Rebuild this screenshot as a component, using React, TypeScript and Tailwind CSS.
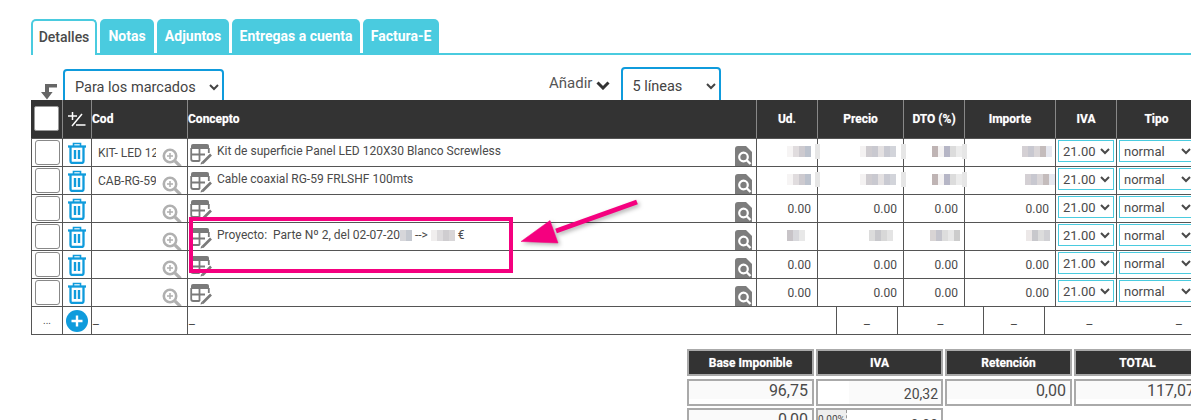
const colsRow = "grid grid-cols-[31px_29px_96px_569px_61px_86px_61px_91px_61px_80px]";
const colsFoot = "grid grid-cols-[31px_29px_96px_649px_61px_86px_61px_89px_90px]";

type Cell = { px: string[]; right: number; bar?: boolean } | string;

const blobA = ["#f6f4f4", "#e0dcde", "#cdcacf", "#bcc2cd"];
const blobB = ["#f4f2f2", "#cfccd0", "#c9c9d0", "#e4e1e2", "#c9cad2", "#d2d4da"];
const blobC = ["#bfb4b4", "#f4f2f2", "#b6b6c6", "#dcdcdc", "#ececec"];
const blobD = ["#d4d0d4", "#c8c8d0", "#dad6d8", "#c4bcbc", "#e6e8f0"];

const rows: { cod: string; text: React.ReactNode; vals: Cell[] }[] = [
  {
    cod: "KIT- LED 12",
    text: "Kit de superficie Panel LED 120X30 Blanco Screwless",
    vals: [
      { px: blobA, right: 6, bar: true },
      { px: blobB, right: 7, bar: true },
      { px: blobC, right: 2, bar: true },
      { px: blobD, right: 3 },
    ],
  },
  {
    cod: "CAB-RG-59",
    text: "Cable coaxial RG-59 FRLSHF 100mts",
    vals: [
      { px: blobA, right: 6, bar: true },
      { px: blobB, right: 7, bar: true },
      { px: blobC, right: 2, bar: true },
      { px: blobD, right: 0 },
    ],
  },
  { cod: "", text: "", vals: ["0.00", "0.00", "0.00", "0.00"] },
  {
    cod: "",
    text: (
      <>
        Proyecto:&nbsp; Parte Nº 2, del 02-07-20
        <Blob px={["#d6d6da", "#c4c8d0"]} /> --&gt; <Blob px={["#f0eeee", "#dddbdd", "#cfcdd0", "#d8d6d8"]} /> €
      </>
    ),
    vals: [
      { px: ["#c8c4c8", "#d8d8dc", "#e8e8e8"], right: 12 },
      { px: ["#dcdcdc", "#c8c8cc", "#d8d8d8", "#e4e4e4"], right: 10 },
      { px: ["#d8d4d4", "#c4c4cc", "#dddddd", "#e8e8e8", "#cccccc"], right: 4 },
      { px: ["#ece8e8", "#c8c8cc", "#dcdcdc", "#d0d0d4"], right: 5 },
    ],
  },
  { cod: "", text: "", vals: ["0.00", "0.00", "0.00", "0.00"] },
  { cod: "", text: "", vals: ["0.00", "0.00", "0.00", "0.00"] },
];

function Blob({ px }: { px: string[] }) {
  return (
    <span className="inline-flex h-[11px] align-middle blur-[0.6px]">
      {px.map((c, i) => (
        <span key={i} className="h-full w-[6px]" style={{ backgroundColor: c }} />
      ))}
    </span>
  );
}

function TrashIcon() {
  return (
    <svg width="20" height="22" viewBox="0 0 20 22" fill="none" stroke="#0f9bdc" strokeWidth="2.3">
      <path d="M1 4.500h18" />
      <path d="M6.500 4V1.500h7V4" strokeWidth="1.6" />
      <path d="M3.500 5v14a2 2 0 0 0 2 2h9a2 2 0 0 0 2-2V5" />
      <path d="M8 8v9M12 8v9" strokeWidth="2.4" />
    </svg>
  );
}

function ZoomIcon() {
  return (
    <svg width="20" height="20" viewBox="0 0 20 20" fill="none" stroke="#b0b0b0">
      <circle cx="8" cy="8" r="6.200" strokeWidth="2.6" />
      <path d="M8 5v6M5 8h6" strokeWidth="1.5" />
      <path d="M12.800 12.800 18.500 18.500" strokeWidth="3.2" />
    </svg>
  );
}

function TableEditIcon() {
  return (
    <svg width="22" height="22" viewBox="0 0 22 22" fill="none">
      <path d="M1 6V3a2 2 0 0 1 2-2h14a2 2 0 0 1 2 2v3z" fill="#7a7a7a" />
      <path d="M1.200 5v11a2 2 0 0 0 2 2h6.500M18.800 5v5M1 11.500h14M9.500 5v13" stroke="#7a7a7a" strokeWidth="1.8" />
      <path d="M12.500 20 21 11.500" stroke="#7a7a7a" strokeWidth="2.6" />
      <path d="m10.500 21.500.8-2.800 2 2z" fill="#7a7a7a" />
    </svg>
  );
}

function DocSearchIcon() {
  return (
    <svg width="18" height="20" viewBox="0 0 18 20" fill="none">
      <path d="M3 0h8l6 6v14H0V3a3 3 0 0 1 3-3z" fill="#7d7d7d" />
      <circle cx="8.500" cy="11" r="4.300" stroke="#fff" strokeWidth="2.2" />
      <path d="m11.500 14 4 4" stroke="#fff" strokeWidth="2.4" />
    </svg>
  );
}

function ValueCell({ value }: { value: Cell }) {
  if (typeof value === "string") {
    return <div className="h-full border-r border-[#555] pr-[6px] pt-[5px] text-right">{value}</div>;
  }
  return (
    <div className="relative flex h-full justify-end border-r border-[#555] pt-[7px]" style={{ paddingRight: value.right }}>
      <Blob px={value.px} />
      {value.bar && <span className="absolute -right-[3px] top-[5px] h-[15px] w-[5px] bg-[#e6e6e6]" />}
    </div>
  );
}

function HeaderCell({ label, center = true }: { label: string; center?: boolean }) {
  return (
    <div className={`flex h-full items-center border-r border-[#888] text-[12px] font-bold text-white [text-shadow:0_0_1px_rgba(255,255,255,0.5)] ${center ? "justify-center" : ""}`}>
      {label}
    </div>
  );
}

function SumBox({ children, className = "" }: { children: React.ReactNode; className?: string }) {
  return <div className={`h-[27px] border-2 border-[#aaa] ${className}`}>{children}</div>;
}

export default function App() {
  return (
    <div className="relative h-[420px] w-[1191px] overflow-hidden bg-white font-['Roboto',sans-serif] text-[12px] text-[#4a4a4a]">
      {/* tabs */}
      <div className="ml-[31px] flex h-[55px] items-end gap-[3px] border-b-2 border-[#4acbdf]">
        <div className="-mb-[2px] flex h-[36px] w-[66px] items-center justify-center rounded-t-[5px] border-2 border-b-0 border-[#4acbdf] bg-white pb-[1px] text-[14px] font-medium">
          Detalles
        </div>
        <div className="flex h-[34px] w-[54px] items-center justify-center rounded-t-[5px] bg-[#4acbdf] pt-[1px] text-[14px] font-bold text-white">Notas</div>
        <div className="flex h-[34px] w-[72px] items-center justify-center rounded-t-[5px] bg-[#4acbdf] pt-[1px] text-[14px] font-bold text-white">Adjuntos</div>
        <div className="flex h-[34px] w-[128px] items-center justify-center rounded-t-[5px] bg-[#4acbdf] pt-[1px] text-[14px] font-bold text-white">Entregas a cuenta</div>
        <div className="flex h-[34px] w-[76px] items-center justify-center rounded-t-[5px] bg-[#4acbdf] pt-[1px] text-[14px] font-bold text-white">Factura-E</div>
      </div>

      {/* actions */}
      <div className="flex h-[45px] items-end overflow-hidden pl-[41px]">
        <svg width="16" height="16" viewBox="0 0 16 16" fill="#666">
          <path d="M4 8V0h12v3.400H8V8h3.600L6 15.500 0 8z" />
        </svg>
        <select className="-mb-[6px] ml-[6px] h-[37px] w-[161px] rounded-[4px] border-2 border-[#0f9bdc] bg-white pl-[6px] text-[14.5px] text-[#444] outline-none">
          <option>Para los marcados</option>
        </select>
        <span className="mb-[6px] ml-[325px] text-[15px] text-[#555]">Añadir</span>
        <svg width="14" height="9" viewBox="0 0 14 9" fill="none" stroke="#333" strokeWidth="3" className="mb-[10px] ml-[4px]">
          <path d="m1.500 1.500 5.500 5.500 5.500-5.500" />
        </svg>
        <select className="-mb-[6px] ml-[11px] h-[39px] w-[100px] rounded-[4px] border-2 border-[#0f9bdc] bg-white pl-[5px] text-[14.5px] text-[#444] outline-none">
          <option>5 líneas</option>
        </select>
      </div>

      {/* table head */}
      <div className={`${colsRow} ml-[31px] h-[39px] border-b border-[#555] bg-[#333] pl-[1px]`}>
        <div className="flex h-full items-center justify-center border-r border-[#888] pr-[2px]">
          <span className="-mt-[1px] h-[25px] w-[25px] rounded-[2px] border border-[#999] bg-white" />
        </div>
        <div className="flex h-full items-center justify-center border-r border-[#888]">
          <svg width="18" height="16" viewBox="0 0 18 16" fill="none" stroke="#fff" strokeWidth="1.5">
            <path d="M0 5h9M4.500 1v8M4 15 14 3M8 14h9.500" />
          </svg>
        </div>
        <HeaderCell label="Cod" center={false} />
        <HeaderCell label="Concepto" center={false} />
        <HeaderCell label="Ud." />
        <HeaderCell label="Precio" />
        <HeaderCell label="DTO (%)" />
        <HeaderCell label="Importe" />
        <HeaderCell label="IVA" />
        <HeaderCell label="Tipo" />
      </div>

      {/* table rows */}
      {rows.map((row, i) => (
        <div key={i} className={`${colsRow} ml-[31px] h-[28px] border-b border-l border-[#555]`}>
          <div className="flex h-full items-start justify-center border-r border-[#555] pt-[1px]">
            <span className="h-[25px] w-[25px] rounded-[3px] border border-[#888]" />
          </div>
          <div className="flex h-full items-start justify-center border-r border-[#555] pt-[3px]">
            <TrashIcon />
          </div>
          <div className="flex h-full overflow-hidden border-r border-[#555] pl-[6px] pt-[5px]">
            <span className="w-[58px] overflow-hidden whitespace-nowrap">{row.cod}</span>
            <span className="ml-[6px] pt-[4px]">
              <ZoomIcon />
            </span>
          </div>
          <div className="flex h-full overflow-hidden border-r border-[#555] pl-[2px] pt-[4px]">
            <TableEditIcon />
            <span className="ml-[5px] leading-[16px]">{row.text}</span>
            <span className="ml-auto mr-[3px] pt-[3px]">
              <DocSearchIcon />
            </span>
          </div>
          {row.vals.map((v, j) => (
            <ValueCell key={j} value={v} />
          ))}
          <div className="flex h-full justify-center border-r border-[#555] pt-[1px]">
            <select className="h-[22px] w-[56px] border border-[#4acbdf] bg-white text-[13px] outline-none">
              <option>21.00</option>
            </select>
          </div>
          <div className="flex h-full pl-[2px] pt-[1px]">
            <select className="h-[22px] w-[76px] border border-[#4acbdf] bg-white text-[13px] outline-none">
              <option>normal</option>
            </select>
          </div>
        </div>
      ))}

      {/* footer row */}
      <div className={`${colsFoot} ml-[31px] h-[28px] border-b border-l border-[#555]`}>
        <div className="flex h-full items-center justify-center border-r border-[#555] text-[10px] leading-none">...</div>
        <div className="flex h-full items-center justify-center border-r border-[#555]">
          <svg width="22" height="22" viewBox="0 0 22 22">
            <circle cx="11" cy="11" r="11" fill="#0f9bdc" />
            <path d="M11 5.500v11M5.500 11h11" stroke="#fff" strokeWidth="2.4" />
          </svg>
        </div>
        <div className="h-full border-r border-[#555] pt-[9px]">–</div>
        <div className="h-full border-r border-[#555] pt-[9px]">–</div>
        <div className="h-full border-r border-[#555] pt-[9px] text-center">–</div>
        <div className="h-full border-r border-[#555] pt-[9px] text-center">–</div>
        <div className="h-full border-r border-[#555] pt-[9px] text-center">–</div>
        <div className="h-full pt-[9px] text-center">–</div>
        <div className="h-full pt-[9px] text-center">–</div>
      </div>

      {/* totals */}
      <div className="mt-[14px] grid w-[1200px] grid-cols-[127px_127px_127px_127px] gap-x-[2px] gap-y-[2px] pl-[687px]">
        {["Base Imponible", "IVA", "Retención", "TOTAL"].map((t) => (
          <div key={t} className="mb-[1px] flex h-[27px] items-center justify-center border-2 border-[#aaa] bg-[#333] text-[12px] font-bold text-white [text-shadow:0_0_1px_rgba(255,255,255,0.5)]">
            {t}
          </div>
        ))}
        <SumBox className="bg-[linear-gradient(#fafafa_80%,#fff_80%)] pr-[4px] text-right text-[16px] leading-[19px]">96,75</SumBox>
        <SumBox className="bg-[linear-gradient(90deg,#fff_25%,#fafafa_25%)] pr-[3px] pt-[3px] text-right text-[14px] leading-[20px]">20,32</SumBox>
        <SumBox className="bg-[linear-gradient(#fafafa_80%,#fff_80%)] pr-[4px] text-right text-[16px] leading-[19px]">0,00</SumBox>
        <SumBox className="bg-[linear-gradient(#fafafa_80%,#fff_80%)] pr-[4px] text-right text-[16px] leading-[19px]">117,07</SumBox>
        <SumBox className="bg-[#fafafa] pr-[4px] text-right text-[16px] leading-[19px]">0,00</SumBox>
        <SumBox className="flex justify-between pr-[3px]">
          <span className="h-[24px] w-[29px] overflow-hidden border-r border-dashed border-[#999] bg-[#eee] text-[10px] leading-[20px]">0.00%</span>
          <span className="pt-[5px] text-[14px] leading-[20px]">0.00</span>
        </SumBox>
      </div>

      {/* annotation */}
      <div className="pointer-events-none absolute left-[189px] top-[217px] h-[56px] w-[324px] border-4 border-[#f5007f]" />
      <svg className="pointer-events-none absolute left-[515px] top-[195px] drop-shadow-[2px_2px_2px_rgba(0,0,0,0.3)]" width="130" height="55" viewBox="515 195 130 55">
        <path d="M637 202 556 231" stroke="#f5007f" strokeWidth="5" />
        <path d="M521 241.500 550 220.500 558 243z" fill="#f5007f" stroke="#f5007f" strokeWidth="0.5" />
      </svg>
    </div>
  );
}
